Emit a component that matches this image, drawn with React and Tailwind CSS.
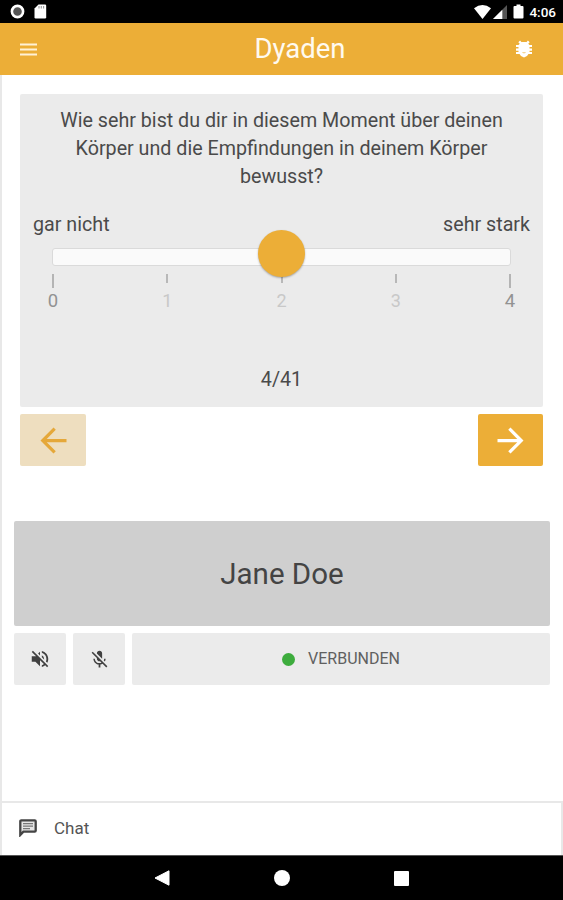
import { MdArrowBack, MdArrowForward, MdVolumeOff, MdMicOff } from 'react-icons/md'

const TICKS = [
  { value: 0, edge: true },
  { value: 1, edge: false },
  { value: 2, edge: false },
  { value: 3, edge: false },
  { value: 4, edge: true },
]

function MenuIcon() {
  return (
    <svg width="17" height="13" viewBox="0 0 17 13">
      <path d="M0 1.500h17M0 6.500h17M0 11.500h17" stroke="#fff1d6" strokeWidth="2.200" />
    </svg>
  )
}

function BugIcon() {
  return (
    <svg width="16" height="18" viewBox="0 0 16 18">
      <path d="M3.200 1.400 5.600 4M12.800 1.400 10.400 4" stroke="#fff" strokeWidth="2.400" />
      <path d="M0 6h16M0 9.600h16M0 13h16" stroke="#fff" strokeWidth="2.200" />
      <path d="M5.500 2h5l3 3v7.500q-1.500 3.500-5.500 5-4-1.500-5.500-5V5z" fill="#fff" />
      <path d="M6 12h4q-.5 1.400-2 1.400T6 12z" fill="#f4d596" />
    </svg>
  )
}

function ChatIcon() {
  return (
    <svg width="18" height="18" viewBox="0 0 18 18" fill="none">
      <path d="M1.300 16V2.300q0-1 1-1h13.400q1 0 1 1v9.400q0 1-1 1H4.400z" fill="#e6e6e6" stroke="#444" strokeWidth="2.300" />
      <path d="M4 4.600h10M4 7.100h10M4 9.600h7" stroke="#777" strokeWidth="1.200" />
    </svg>
  )
}

function StatusBar() {
  return (
    <div className="h-[23px] bg-black flex items-center justify-between pl-[10px] pr-[7px] shrink-0">
      <div className="flex items-center gap-[9px]">
        <svg width="15" height="15" viewBox="0 0 15 15">
          <circle cx="7.500" cy="7.500" r="5.600" fill="#555" stroke="#fff" strokeWidth="2.600" />
        </svg>
        <svg width="13" height="15" viewBox="0 0 13 15">
          <path d="M4.500.5H11q1.200 0 1.200 1.200v11.600q0 1.200-1.200 1.200H1.700q-1.200 0-1.200-1.200V4.500z" fill="#fff" />
          <path d="M5 2v2.500M7.300 2v2.500M9.600 2v2.500" stroke="#999" strokeWidth="1.100" />
        </svg>
      </div>
      <div className="flex items-center">
        <svg width="17" height="14" viewBox="0 0 17 14">
          <path d="M0 3.200Q8.500-3 17 3.200L8.500 14z" fill="#fff" />
        </svg>
        <svg className="ml-[2px]" width="14" height="14" viewBox="0 0 14 14">
          <path d="M14 0v14H0z" fill="#555" />
          <path d="M9.300 4.700V14H0z" fill="#fff" />
        </svg>
        <svg className="ml-[6px]" width="11" height="15" viewBox="0 0 11 15">
          <path d="M3.500.5h4V2h2Q10.500 2 10.500 3v10.500q0 1-1 1h-8q-1 0-1-1V3q0-1 1-1h2z" fill="#fff" />
        </svg>
        <span className="ml-[5px] mt-[2px] text-[13.500px] leading-none font-medium text-white">4:06</span>
      </div>
    </div>
  )
}

function Header() {
  return (
    <div className="h-[52px] bg-[#ecae37] flex items-center justify-between pl-5 pr-[31px] shrink-0">
      <MenuIcon />
      <h1 className="text-[27.500px] leading-none text-[#fffaf0] ml-[47px] -mt-px">Dyaden</h1>
      <BugIcon />
    </div>
  )
}

function Slider() {
  return (
    <div className="relative mx-8 mt-[9px] h-[66px]">
      <div className="h-[18px] rounded-[3px] border border-[#dadada] bg-[#fafafa]" />
      <div className="flex justify-between mt-[8px] -mx-[9px]">
        {TICKS.map(t => (
          <div key={t.value} className="w-5 h-10 flex flex-col items-center">
            <div className="h-[14px] shrink-0">
              <div className={t.edge ? 'w-[2px] h-[14px] bg-[#b4b4b4]' : 'w-[2px] h-[9px] bg-[#b8b8b8]'} />
            </div>
            <span className={t.edge ? 'text-[18.500px] leading-[26px] text-[#929292]' : 'text-[18px] leading-[26px] text-[#c8c8c8]'}>
              {t.value}
            </span>
          </div>
        ))}
      </div>
      <div className="absolute left-1/2 -top-[18px] -ml-[23.500px] size-[47px] rounded-full bg-[#ecae37] shadow-[0_1px_2px_rgba(0,0,0,0.3)]" />
    </div>
  )
}

function Question() {
  return (
    <div className="h-[313px] bg-[#ebebeb] rounded-[2px] pt-[13px] text-[#4a4a4a] text-[19.700px] flex flex-col">
      <p className="text-center leading-7">
        Wie sehr bist du dir in diesem Moment über deinen<br />
        Körper und die Empfindungen in deinem Körper<br />
        bewusst?
      </p>
      <div className="flex justify-between px-[13px] mt-[20px] leading-7">
        <span>gar nicht</span>
        <span>sehr stark</span>
      </div>
      <Slider />
      <div className="text-center leading-7 mt-[52px]">4/41</div>
    </div>
  )
}

function Partner() {
  return (
    <div className="mt-[55px] pl-[12px] pr-[13px]">
      <div className="h-[105px] bg-[#cfcfcf] rounded-[2px] flex items-center justify-center pt-[2px] text-[29.500px] text-[#444]">
        Jane Doe
      </div>
      <div className="flex gap-[7px] mt-[7px] h-[52px] text-[#404040]">
        <button className="w-[52px] bg-[#ebebeb] rounded-[2px] flex items-center justify-center">
          <MdVolumeOff size={22} />
        </button>
        <button className="w-[52px] bg-[#ebebeb] rounded-[2px] flex items-center justify-center">
          <MdMicOff size={21} />
        </button>
        <div className="flex-1 bg-[#ebebeb] rounded-[2px] flex items-center justify-center gap-[13px]">
          <span className="size-[13px] rounded-full bg-[#3dac3d]" />
          <span className="text-[16px] text-[#606060]">VERBUNDEN</span>
        </div>
      </div>
    </div>
  )
}

function NavBar() {
  return (
    <div className="h-[45px] bg-black border-t border-[#555] flex justify-center items-center gap-[104px] shrink-0">
      <svg width="16" height="16" viewBox="0 0 16 16">
        <path d="M15 .8v14.400L1 8z" fill="#fff" stroke="#fff" strokeLinejoin="round" />
      </svg>
      <div className="size-4 rounded-full bg-white" />
      <div className="size-[15px] rounded-[1px] bg-white" />
    </div>
  )
}

export default function App() {
  return (
    <div className="w-[563px] h-[900px] flex flex-col bg-white overflow-hidden font-['Roboto',sans-serif]">
      <StatusBar />
      <Header />
      <main className="flex-1 flex flex-col border-l-2 border-[#e8e8e8]">
        <div className="pl-[18px] pr-5 pt-[19px]">
          <Question />
          <div className="flex justify-between mt-[7px]">
            <button className="w-[66px] h-[52px] rounded-[2px] bg-[#eedebf] text-[#e5a83a] flex items-center justify-center">
              <MdArrowBack size={39} />
            </button>
            <button className="w-[65px] h-[52px] rounded-[2px] bg-[#ecae37] text-white flex items-center justify-center">
              <MdArrowForward size={39} />
            </button>
          </div>
        </div>
        <Partner />
        <div className="mt-auto h-[54px] border-t-2 border-r-2 border-[#e8e8e8] flex items-center pl-[17px] gap-[17px] pb-[2px]">
          <ChatIcon />
          <span className="text-[17px] text-[#555] mt-[2px]">Chat</span>
        </div>
      </main>
      <NavBar />
    </div>
  )
}
